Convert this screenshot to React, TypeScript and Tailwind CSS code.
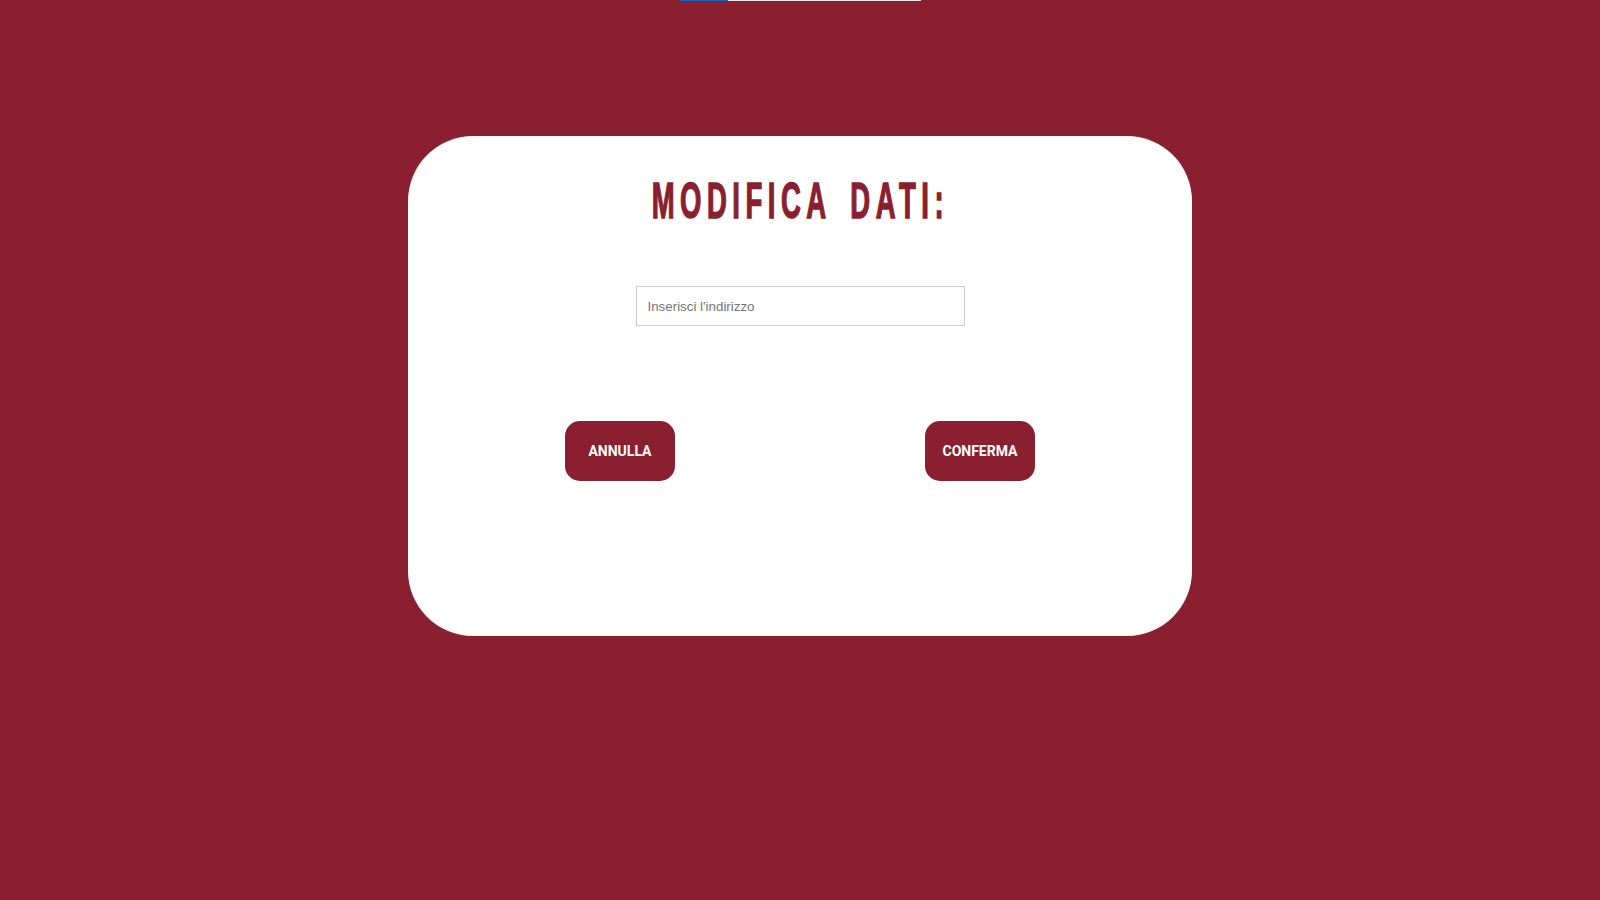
export default function App() {
  return (
    <main className="min-h-screen w-full bg-[#8a1f30] flex flex-col items-center font-['Liberation_Sans',Arial,sans-serif]">
      {/* loading bar at the very top */}
      <div className="flex w-[241px] h-px">
        <div className="w-[48px] h-px bg-[#0a66c2]" />
        <div className="flex-1 h-px bg-[#e6e6e6]" />
      </div>

      <section className="mt-[135px] w-[784px] h-[500px] rounded-[65px] bg-white flex flex-col items-center">
        <h1 className="pt-[40px] h-[90px] leading-none">
          <span className="inline-block scale-x-[0.55] text-[50px] font-bold tracking-[10px] [word-spacing:12px] text-[#8a1f30] whitespace-nowrap [-webkit-text-stroke:1.5px_#8a1f30]">
            MODIFICA DATI:
          </span>
        </h1>

        <input
          type="text"
          placeholder="Inserisci l'indirizzo"
          className="mt-[60px] w-[329px] h-[40px] border border-[#cccccc] px-[11px] text-[13.33px] text-[#333] placeholder:text-[#757575] outline-none"
        />

        <div className="mt-[95px] w-[720px] flex justify-around font-['Roboto',Arial,sans-serif]">
          <button className="w-[110px] h-[60px] rounded-[15px] bg-[#8a1f30] text-white text-[14px] font-bold">
            ANNULLA
          </button>
          <button className="w-[110px] h-[60px] rounded-[15px] bg-[#8a1f30] text-white text-[14px] font-bold">
            CONFERMA
          </button>
        </div>
      </section>
    </main>
  )
}
